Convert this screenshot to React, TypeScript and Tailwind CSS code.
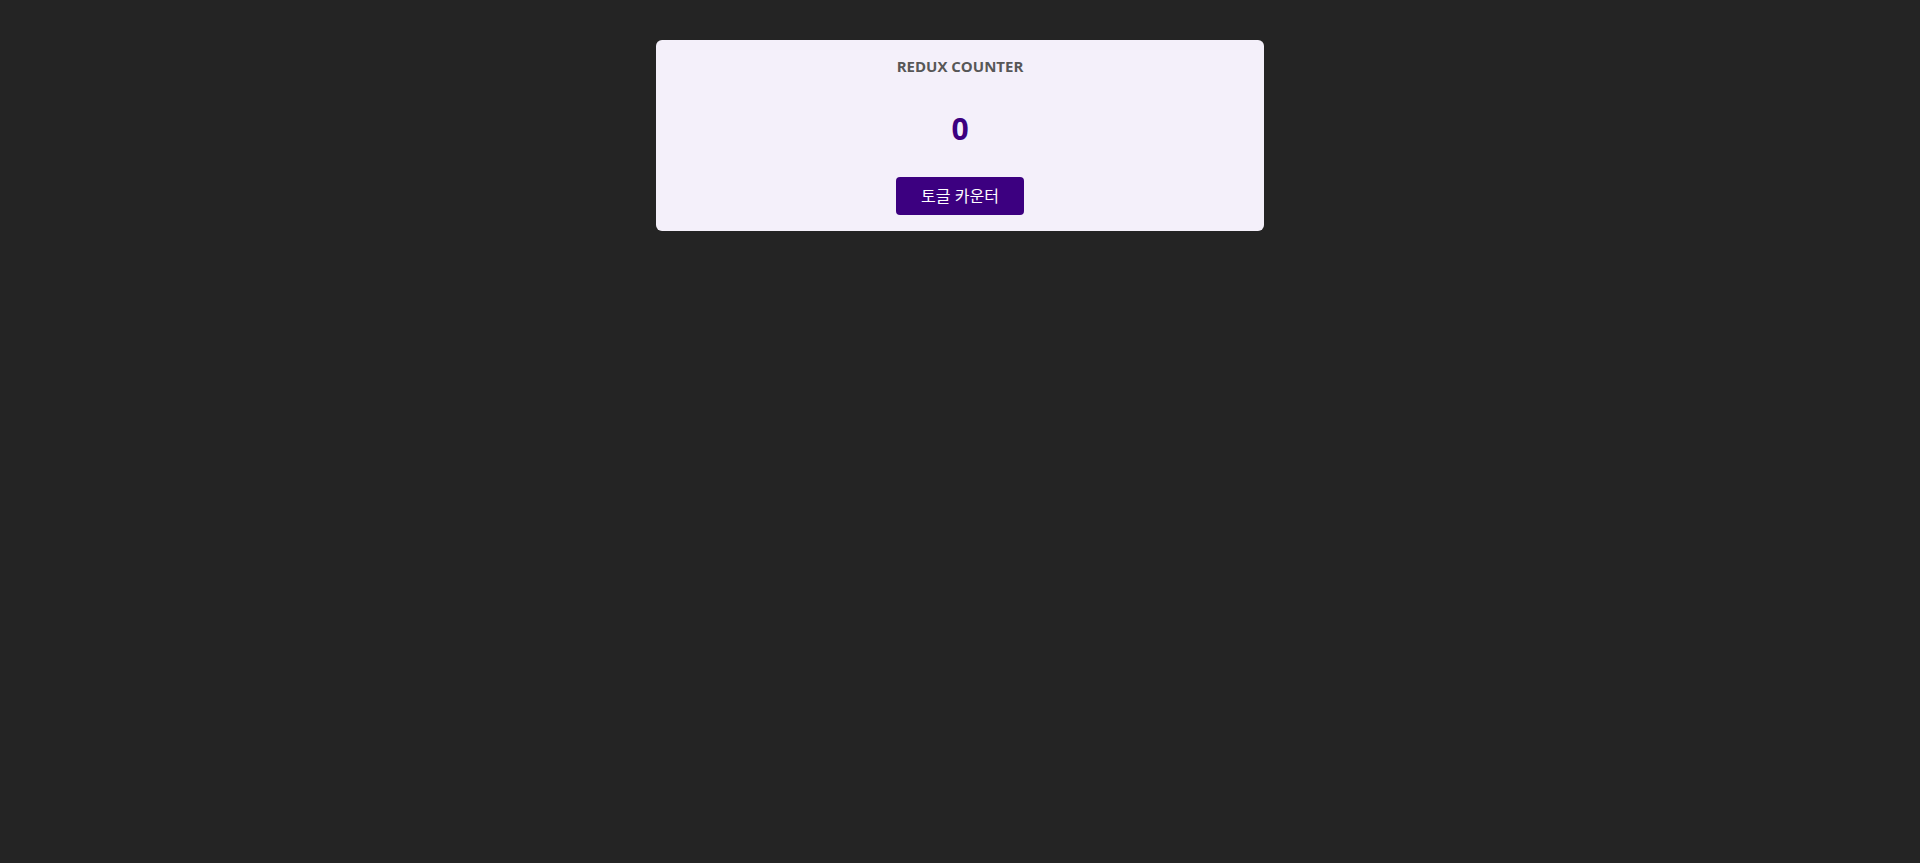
import React, { useState } from "react";

export default function App() {
  const [show, setShow] = useState(true);
  const counter = 0;

  return (
    <div className="min-h-screen bg-[#242424] pt-10 font-['Open_Sans','Noto_Sans_CJK_KR',sans-serif]">
      <main className="mx-auto w-[608px] rounded-md bg-[#f4f0fa] p-4 text-center">
        <h1 className="text-[15px] leading-[20px] font-bold uppercase text-[#575757]">
          Redux Counter
        </h1>
        {show && (
          <div className="mt-[35px] mb-[30px] text-[30px] leading-[36px] font-bold text-[#3c0080]">
            {counter}
          </div>
        )}
        <button
          onClick={() => setShow((s) => !s)}
          className="h-[38px] w-[128px] rounded bg-[#3c0080] text-[16px] text-white"
        >
          토글 카운터
        </button>
      </main>
    </div>
  );
}
